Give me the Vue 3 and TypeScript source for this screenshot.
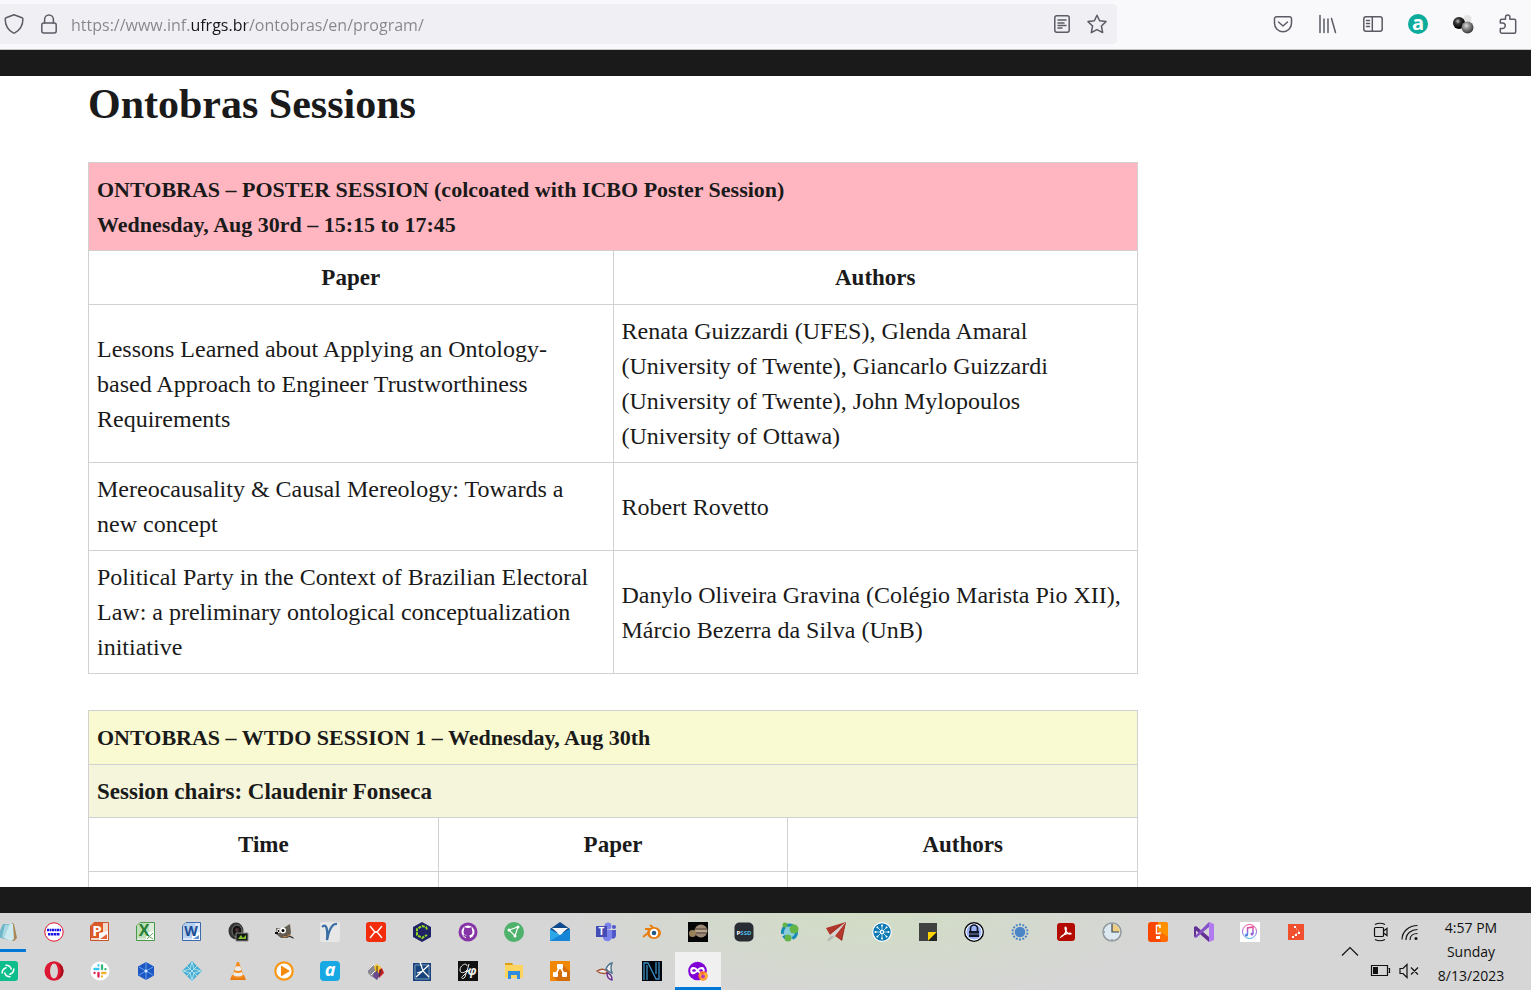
<script setup lang="ts">
import { ref } from 'vue'

interface Paper {
  title: string
  authors: string
}

const url = ref('https://www.inf.ufrgs.br/ontobras/en/program/')

const papers: Paper[] = [
  {
    title: 'Lessons Learned about Applying an Ontology-\nbased Approach to Engineer Trustworthiness Requirements',
    authors:
      'Renata Guizzardi (UFES), Glenda Amaral (University of Twente), Giancarlo Guizzardi\n(University of Twente), John Mylopoulos\n(University of Ottawa)',
  },
  {
    title: 'Mereocausality & Causal Mereology: Towards a new concept',
    authors: 'Robert Rovetto',
  },
  {
    title: 'Political Party in the Context of Brazilian Electoral Law: a preliminary ontological conceptualization initiative',
    authors: 'Danylo Oliveira Gravina (Colégio Marista Pio XII), Márcio Bezerra da Silva (UnB)',
  },
]

const spokes = [0, 45, 90, 135, 180, 225, 270, 315]
const quarters = [0, 90, 180, 270]
const teeth = Array.from({ length: 14 }, (_, i) => (i * 360) / 14)
</script>

<template>
  <div class="screen">
    <header class="toolbar">
      <div class="urlbar">
        <button class="tool shield" aria-label="Tracking protection">
          <svg viewBox="0 0 20 20" class="line">
            <path d="M10 .8 18 3.8c.6.2.9.7.9 1.3 0 5.600-2.800 11-8.100 13.800a1.700 1.700 0 0 1-1.600 0C3.900 16.100 1.200 10.700 1.200 5.100c0-.6.300-1.100.9-1.300z" />
          </svg>
        </button>
        <button class="tool lock" aria-label="Connection secure">
          <svg viewBox="0 0 20 20" class="line">
            <rect x="2.800" y="9" width="14.400" height="10" rx="2" />
            <path d="M5.600 9V5.300a4.400 4.400 0 0 1 8.800 0V9" />
          </svg>
        </button>
        <input v-model="url" class="address" type="text" aria-label="Address" spellcheck="false" />
        <button class="tool" aria-label="Reader view">
          <svg viewBox="0 0 20 20" class="line">
            <rect x="2.800" y="1.800" width="14.400" height="16.400" rx="2" />
            <path d="M6 6h8M6 9h6M6 11.500h8M6 14h4" />
          </svg>
        </button>
        <button class="tool" aria-label="Bookmark this page">
          <svg viewBox="0 0 20 20" class="line">
            <path d="M10 1.200 12.600 6.800 19 7.600 14.400 12 15.700 18.600 10 15.600 4.300 18.600 5.600 12 1 7.600 7.400 6.800z" />
          </svg>
        </button>
      </div>
      <div class="extensions">
        <button class="ext" aria-label="Save to Pocket">
          <svg viewBox="0 0 20 20" class="line">
            <path d="M3.500 2.700h13a2 2 0 0 1 2 2v4.500a8.500 8.500 0 0 1-17 0V4.700a2 2 0 0 1 2-2z" />
            <path d="m5.500 8 4.500 4 4.500-4" />
          </svg>
        </button>
        <button class="ext" aria-label="Library">
          <svg viewBox="0 0 20 20" class="line">
            <path d="M2 1.500v17M6 5v13.500M10 5v13.500M13.500 4.500l4 14" />
          </svg>
        </button>
        <button class="ext" aria-label="Sidebars">
          <svg viewBox="0 0 20 20" class="line">
            <rect x=".8" y="2.800" width="18.400" height="14.400" rx="2.200" />
            <path d="M9.300 3v14M3.500 6.500h3M3.500 9.500h3M3.500 12.500h3" />
          </svg>
        </button>
        <button class="ext" aria-label="Extension a">
          <svg viewBox="0 0 20 20">
            <circle cx="10" cy="10" r="10" fill="#0cab9c" />
            <text x="10" y="15.500" text-anchor="middle" class="glyph" font-size="20" fill="#fff">a</text>
          </svg>
        </button>
        <button class="ext" aria-label="Extension molecules">
          <svg viewBox="0 0 20 20">
            <defs>
              <radialGradient id="ball-dark" cx=".4" cy=".35" r=".6"><stop offset="0" stop-color="#bbb" /><stop offset=".4" stop-color="#333" /><stop offset="1" stop-color="#000" /></radialGradient>
              <radialGradient id="ball-mid" cx=".4" cy=".35" r=".6"><stop offset="0" stop-color="#ddd" /><stop offset=".5" stop-color="#888" /><stop offset="1" stop-color="#444" /></radialGradient>
            </defs>
            <circle cx="14.500" cy="5" r="4" fill="#e4e4e4" />
            <circle cx="6" cy="9" r="6" fill="url(#ball-dark)" />
            <circle cx="14.500" cy="13.500" r="6" fill="url(#ball-mid)" />
          </svg>
        </button>
        <button class="ext" aria-label="Extensions">
          <svg viewBox="0 0 20 20" class="line">
            <path d="M2.300 8.500V6.700a1.500 1.500 0 0 1 1.500-1.500h3.700V3.200a2.200 2.200 0 0 1 4.400 0v2h4.300a1.500 1.500 0 0 1 1.500 1.500v11a1.500 1.500 0 0 1-1.500 1.500H3.800a1.500 1.500 0 0 1-1.500-1.500v-3.200h2.200a2.200 2.200 0 0 0 0-5.500H2.300z" />
          </svg>
        </button>
      </div>
    </header>

    <main class="viewport">
      <div class="page">
        <h1>Ontobras Sessions</h1>

        <table>
          <tbody>
            <tr class="title poster">
              <td colspan="2">
                <strong>ONTOBRAS – POSTER SESSION (colcoated with ICBO Poster Session)<br />Wednesday, Aug 30rd – 15:15 to 17:45</strong>
              </td>
            </tr>
            <tr>
              <th scope="col">Paper</th>
              <th scope="col">Authors</th>
            </tr>
            <tr v-for="paper in papers" :key="paper.title" class="paper">
              <td>{{ paper.title }}</td>
              <td>{{ paper.authors }}</td>
            </tr>
          </tbody>
        </table>

        <table>
          <tbody>
            <tr class="title wtdo">
              <td colspan="3"><strong>ONTOBRAS – WTDO SESSION 1 – Wednesday, Aug 30th</strong></td>
            </tr>
            <tr class="chairs">
              <td colspan="3"><strong>Session chairs: Claudenir Fonseca</strong></td>
            </tr>
            <tr>
              <th scope="col">Time</th>
              <th scope="col">Paper</th>
              <th scope="col">Authors</th>
            </tr>
            <tr class="blank">
              <td></td>
              <td></td>
              <td></td>
            </tr>
          </tbody>
        </table>
      </div>
    </main>

    <footer class="taskbar">
      <nav class="apps" aria-label="Applications">
        <div class="row">
          <button class="app open" aria-label="Notepad">
            <svg viewBox="0 0 20 20"><path d="m14 1 2 1 3 14-3 3-4-1z" fill="#a98653" /><path d="M5 2h10l-4 16-12-3z" fill="#6fb6c8" /><path d="m7 3 8-1-3 16-8-3z" fill="#a9d8e2" /><path d="m12 2 3 0 1 15-3 2-7-3z" fill="#cdeaf0" /></svg>
          </button>
          <button class="app" aria-label="Human viewer">
            <svg viewBox="0 0 20 20"><circle cx="10" cy="10" r="9.200" fill="#fff" stroke="#e2122b" /><path d="M3 8h14" stroke="#1a14e8" stroke-width="2.500" stroke-dasharray="2.500 .5 1.500 .5" /><path d="M4 12.300h12" stroke="#1a14e8" stroke-width="2.500" stroke-dasharray="2 .5 3 .5" /></svg>
          </button>
          <button class="app" aria-label="PowerPoint">
            <svg viewBox="0 0 20 20"><path d="M4 .5h14.500v18H.5V4z" fill="#f2d9cc" stroke="#c8532b" /><path d="M4 1h9v15H1V4z" fill="#dd5a28" /><path d="m9 11 9-2v9H9z" fill="#fff" /><path d="m10 17 7-5v5z" fill="#e36437" /><text x="7" y="14" text-anchor="middle" class="glyph" font-size="15" fill="#fff">P</text></svg>
          </button>
          <button class="app" aria-label="Excel">
            <svg viewBox="0 0 20 20"><path d="M4 .5h14.500v18H.5V4z" fill="#dcecd8" stroke="#4b9a4b" /><path d="M4 1h9v15H1V4z" fill="#bddfb7" /><path d="m10 11 8-2v9h-8z" fill="#fff" /><path d="m11 17 6-6M11 13l6 4" stroke="#61a861" /><text x="8" y="14" text-anchor="middle" class="glyph" font-size="16" fill="#278035">X</text></svg>
          </button>
          <button class="app" aria-label="Word">
            <svg viewBox="0 0 20 20"><path d="M4 .5h14.500v18H.5V4z" fill="#dce8f7" stroke="#3b69a9" /><path d="M4 1h9v15H1V4z" fill="#b6d1ef" /><path d="m10 12 8-2v8h-8z" fill="#fff" /><path d="m11 17 6-4v4z" fill="#5d8fce" /><text x="9" y="14" text-anchor="middle" class="glyph" font-size="14" fill="#1d4c96">W</text></svg>
          </button>
          <button class="app" aria-label="Camera">
            <svg viewBox="0 0 20 20"><ellipse cx="8" cy="9" rx="7.500" ry="8.500" fill="#343434" /><ellipse cx="9" cy="9" rx="5" ry="6" fill="#121212" stroke="#767676" /><circle cx="9" cy="8" r="2" fill="#4a3034" /><path d="M8 11h12v8H8z" fill="#151a15" stroke="#888" /><path d="m10 17 3-4 2 3 3-3v4z" fill="#86c232" /></svg>
          </button>
          <button class="app" aria-label="GIMP">
            <svg viewBox="0 0 20 20"><path d="M2 6 8 7l8-5 1 9-3 5H7l-5-4z" fill="#625c52" /><path d="m10 13 4 0 5 2 1 2-2-1-5-2z" fill="#323232" /><circle cx="4.500" cy="9" r="2" fill="#fff" /><circle cx="9" cy="8.500" r="3" fill="#fff" /><circle cx="4.500" cy="9" r="1" /><circle cx="9" cy="8.500" r="1.500" /><path d="M1 10h3v2H1z" fill="#111" /><path d="m9 15 8-2" stroke="#c68142" /></svg>
          </button>
          <button class="app" aria-label="Vym">
            <svg viewBox="0 0 20 20"><rect width="20" height="20" rx="2" fill="#e7e7e7" /><path d="M2 5c4-4 6 1 5 13C8 12 11 1 17 2" fill="none" stroke="#3b6fa5" stroke-width="2.300" /></svg>
          </button>
          <button class="app" aria-label="XMind">
            <svg viewBox="0 0 20 20"><rect width="20" height="20" rx="3" fill="#f32c0b" /><path d="m4 4 4 5q2 2 4 0l4-5M4 16l4-5q2-2 4 0l4 5" fill="none" stroke="#fff" stroke-width="1.400" /></svg>
          </button>
          <button class="app" aria-label="Hex client">
            <svg viewBox="0 0 20 20"><path d="m10 0 9 5v10l-9 5-9-5V5z" fill="#202363" /><path d="M15 7.500 14 5l-4-1-5 3v6l5 3 5-3" fill="none" stroke="#91dc1d" stroke-width="2" stroke-dasharray="3 1" /></svg>
          </button>
          <button class="app" aria-label="GitHub Desktop">
            <svg viewBox="0 0 20 20"><circle cx="10" cy="10" r="9.500" fill="#8734a6" /><circle cx="10" cy="10" r="6.500" fill="#fff" /><path d="M6.500 5 9 6h2l2.500-1 .5 3c1 3 0 5-2.500 5l.5 4H8v-2c-2 0-2-2-3-2 2-1 2 1 3.500.500V13C6 13 5 11 6 8z" fill="#8734a6" /></svg>
          </button>
          <button class="app" aria-label="Graph">
            <svg viewBox="0 0 20 20"><circle cx="10" cy="10" r="10" fill="#4eb16c" /><path d="m5 8 9-3-3 9z" fill="none" stroke="#fff" stroke-width="1.200" /><g fill="#fff"><circle cx="5" cy="8" r="1.500" /><circle cx="14" cy="5" r="1.500" /><circle cx="11" cy="14" r="1.500" /></g></svg>
          </button>
          <button class="app" aria-label="Mail">
            <svg viewBox="0 0 20 20"><path d="m0 7 10-7 10 7v4H0z" fill="#0e4b8c" /><path d="M0 7l10 6 10-6v12H0z" fill="#2ca7ea" /><path d="m0 19 20-12v12z" fill="#1586d7" /><path d="M2 6h16l-8 7z" fill="#f6f6f6" /></svg>
          </button>
          <button class="app" aria-label="Teams">
            <svg viewBox="0 0 20 20"><circle cx="12" cy="4" r="3.500" fill="#7b83eb" /><circle cx="18" cy="5" r="2" fill="#5059c9" /><path d="M15 8h5v6q-1 4-5 2z" fill="#5059c9" /><path d="M7 8h9v7q-1 5-6 4-3-1-3-4z" fill="#7b83eb" /><rect y="4" width="11" height="11" fill="#434bb5" /><text x="5.500" y="13" text-anchor="middle" class="glyph" font-size="10" fill="#fff">T</text></svg>
          </button>
          <button class="app" aria-label="Blender">
            <svg viewBox="0 0 20 20"><path d="M1 15 11 7H3M8 3l6 5" fill="none" stroke="#e87d0d" stroke-width="2" /><ellipse cx="12" cy="11" rx="7" ry="6" fill="#e87d0d" /><circle cx="12" cy="11" r="4.200" fill="#fff" /><circle cx="12" cy="11" r="2.300" fill="#265787" /></svg>
          </button>
          <button class="app" aria-label="Planets">
            <svg viewBox="0 0 20 20"><path d="M0 0h20v20H0z" fill="#050505" /><circle cx="13" cy="9" r="6.500" fill="#9b8875" /><path d="M7 7h12M7 11h12" stroke="#554138" /><path d="M7 9h12" stroke="#d4c4aa" /><circle cx="4.500" cy="11.500" r="3.500" fill="#99815a" /></svg>
          </button>
          <button class="app" aria-label="PSSD">
            <svg viewBox="0 0 20 20"><rect x=".5" y=".5" width="19" height="19" rx="5" fill="#292d33" /><text x="10" y="12.500" text-anchor="middle" class="glyph" font-size="6" fill="#4bb8ed"><tspan fill="#fff">P</tspan>SSD</text></svg>
          </button>
          <button class="app" aria-label="Network globe">
            <svg viewBox="0 0 20 20"><circle cx="9.500" cy="10" r="7" fill="#8bcbdc" stroke="#168bb8" stroke-width="3" stroke-dasharray="8 2" /><g fill="#63b548"><circle cx="14" cy="7" r="4.500" /><circle cx="8" cy="16" r="3.500" /><circle cx="5" cy="3" r="2.500" /></g></svg>
          </button>
          <button class="app" aria-label="Paper plane">
            <svg viewBox="0 0 20 20"><path d="m1 18 8-8 2 3-8 6z" fill="#aaa" opacity=".7" /><path d="M0 6 20 0 4 13z" fill="#ad3529" /><path d="M20 0 10 14l6 5z" fill="#8d231c" /><path d="m4 13 16-13L9 15z" fill="#d5d5d5" /><path d="m20 0-11 14 6 4z" fill="#b53a2d" /></svg>
          </button>
          <button class="app" aria-label="Hub">
            <svg viewBox="0 0 20 20"><circle cx="10" cy="10" r="9.300" fill="#0978b3" stroke="#fff" stroke-width="1.200" /><g v-for="a in spokes" :key="a" :transform="`rotate(${a} 10 10)`"><path d="M10 8V3" stroke="#fff" stroke-width=".7" /><circle cx="10" cy="3.500" r="1" fill="#fff" /></g><circle cx="10" cy="10" r="2.200" fill="#fff" /><circle cx="10" cy="10" r="1" fill="#0978b3" /></svg>
          </button>
          <button class="app" aria-label="Sticky Notes">
            <svg viewBox="0 0 20 20"><path d="M1 1h18v18H1z" fill="#414141" /><path d="M10 10h9l-9 9z" fill="#ffd400" /><path d="M19 10v9h-9z" fill="#232323" /></svg>
          </button>
          <button class="app" aria-label="KeePass">
            <svg viewBox="0 0 20 20"><circle cx="10" cy="10" r="9.300" fill="#9eb2f6" stroke="#080808" stroke-width="1.400" /><circle cx="10" cy="10" r="8" fill="none" stroke="#fff" /><path d="M6.500 9V6.500a3.500 3.500 0 0 1 7 0V9" fill="none" stroke="#101827" stroke-width="1.700" /><path d="M5 9h10v6H5z" fill="#101827" /><path d="M5 12h10" stroke="#8fa7e8" stroke-width=".8" /></svg>
          </button>
          <button class="app" aria-label="Blue sun">
            <svg viewBox="0 0 20 20"><circle cx="10" cy="10" r="5.300" fill="#4d86c6" /><path v-for="a in teeth" :key="a" :transform="`rotate(${a} 10 10)`" d="M9 1.500h2v2H9z" fill="#4d86c6" /></svg>
          </button>
          <button class="app" aria-label="Acrobat">
            <svg viewBox="0 0 20 20"><rect x="1" y="1" width="18" height="18" rx="3" fill="#b30b00" /><path d="M5 15c6-3 6-10 4.500-10S10 13 15 12c1-2-8 0-10 3z" fill="none" stroke="#fff" stroke-width="1.200" /></svg>
          </button>
          <button class="app" aria-label="Clock">
            <svg viewBox="0 0 20 20"><circle cx="10" cy="10" r="9" fill="#dce9f0" stroke="#92999e" stroke-width="1.500" /><path d="M10 10V2a8 8 0 0 1 8 8z" fill="#efcd83" /><path d="M10 2v8h7" fill="none" stroke="#354759" stroke-width="1.200" /><path d="M10 17v1M2 10h1" stroke="#59636c" /></svg>
          </button>
          <button class="app" aria-label="CCleaner">
            <svg viewBox="0 0 20 20"><rect width="20" height="20" rx="3" fill="#f94700" /><path d="M10 0h7q3 0 3 3v12L10 9z" fill="#ff9100" /><path d="m10 9 10 6v2q0 3-3 3h-4z" fill="#ff6d00" /><path d="M12 6V3.500H8.500v8H12V10" fill="none" stroke="#fff" stroke-width="1.500" /><path d="M8 14h4v3H8z" fill="#fff" /></svg>
          </button>
          <button class="app" aria-label="Visual Studio">
            <svg viewBox="0 0 20 20"><path d="M0 5 2 4l13 11v5L2 8.500v6L0 15z" fill="#623193" /><path d="M0 15 15 0v5L2 16z" fill="#8650c7" /><path d="m15 0 5 2v16l-5 2z" fill="#b27af0" /></svg>
          </button>
          <button class="app" aria-label="iTunes">
            <svg viewBox="0 0 20 20"><defs><linearGradient id="tunes" x2="0" y2="1"><stop stop-color="#ed4d91" /><stop offset=".5" stop-color="#a15bd7" /><stop offset="1" stop-color="#3fb3ed" /></linearGradient></defs><path d="M0 0h20v20H0z" fill="#fff" /><circle cx="9.500" cy="9.500" r="7" fill="none" stroke="url(#tunes)" /><path d="M7.500 13V6l5.500-1v7" fill="none" stroke="url(#tunes)" stroke-width="1.500" /><circle cx="6.500" cy="13" r="1.500" fill="#557be2" /><circle cx="12" cy="12" r="1.500" fill="#9a5bd8" /></svg>
          </button>
          <button class="app" aria-label="Git graph">
            <svg viewBox="0 0 20 20"><path d="M2 2h16v16H2z" fill="#f1502f" /><path d="m8 5 5 4-5 6" fill="none" stroke="#fff" stroke-width="1" stroke-dasharray="1 2" /><g fill="#fff"><path d="M8 4h2v2H8zM12 10h2v2h-2zM9 12h2v2H9zM6 14h2v2H6z" /></g></svg>
          </button>
        </div>
        <div class="row lower">
          <button class="app" aria-label="Element">
            <svg viewBox="0 0 20 20"><rect x="-2" width="22" height="20" rx="3" fill="#0dbd8b" /><g fill="none" stroke="#fff" stroke-width="1.500" stroke-linecap="round"><path v-for="a in quarters" :key="a" :transform="`rotate(${a} 10 10)`" d="M8 4.200q4 0 5.200 3.800" /></g></svg>
          </button>
          <button class="app" aria-label="Opera">
            <svg viewBox="0 0 20 20"><ellipse cx="10" cy="10" rx="9.500" ry="9.800" fill="#dc1832" /><path d="M14 3c4 3 4 11 0 14 4 0 5.500-4 5.500-7S18 3 14 3z" fill="#a70d1c" /><ellipse cx="10" cy="10" rx="4" ry="7.500" fill="#d6d6d6" /></svg>
          </button>
          <button class="app" aria-label="Slack">
            <svg viewBox="0 0 20 20"><circle cx="10" cy="10" r="9.500" fill="#fff" /><g fill="none" stroke-width="2.300" stroke-linecap="round"><path d="M8.500 4.500v.1M4.500 8h4" stroke="#36c5f0" /><path d="M12 4.500v3.500M15.500 8.200h-.1" stroke="#2eb67d" /><path d="M12 15.500v-.1M12 12h3.500" stroke="#ecb22e" /><path d="M8.500 12v3.500M4.500 12h.1" stroke="#e01e5a" /></g></svg>
          </button>
          <button class="app" aria-label="Blue hexagon">
            <svg viewBox="0 0 20 20"><path d="m10 1 8 4.500v9L10 19l-8-4.500v-9z" fill="#1d57c4" /><path d="M10 1v18M3 6l14 8M17 6 3 14" stroke="#79b2f7" stroke-width=".8" /><circle cx="10" cy="10" r="1.500" fill="#d6e8ff" /></svg>
          </button>
          <button class="app" aria-label="Blue diamond">
            <svg viewBox="0 0 20 20"><path d="m10 0 10 10-10 10L0 10z" fill="#49add3" /><path d="m5 5 10 10M15 5 5 15M10 1 8 8l-7 2 7 2 2 7 2-7 7-2-7-2z" fill="none" stroke="#c4eef9" stroke-width=".8" /></svg>
          </button>
          <button class="app" aria-label="VLC">
            <svg viewBox="0 0 20 20"><path d="m4 14-2 5h16l-2-5z" fill="#e77a10" /><path d="M9 1h2l5 15q-6 3-12 0z" fill="#f58d1e" /><path d="m8 5-1.500 4q4 2 7 0L12 5q-2 1-4 0zM6 11l-1 3q5 3 10 0l-1-3q-4 2-8 0z" fill="#eee" /></svg>
          </button>
          <button class="app" aria-label="Media player">
            <svg viewBox="0 0 20 20"><circle cx="10" cy="10" r="8.700" fill="#fff" stroke="#f99815" stroke-width="2.200" /><path d="m7 4.500 9 5.500-9 5.500z" fill="#f48a0c" /></svg>
          </button>
          <button class="app" aria-label="Audio a">
            <svg viewBox="0 0 20 20"><rect width="20" height="20" rx="4" fill="#18a9e5" /><text x="10" y="15" text-anchor="middle" class="glyph slant" font-size="18" fill="#fff">a</text></svg>
          </button>
          <button class="app" aria-label="Colour blocks">
            <svg viewBox="0 0 20 20"><path d="m2 8 5-4 3 3 1 8-5 1-4-4z" fill="#8c8794" /><path d="m8 5 3-2 4 3v7l-5 1z" fill="#efc52c" /><path d="m13 9 3-2 2 5-5 5z" fill="#c22125" /><path d="m8 12 3-2 3 4-3 5-4-3z" fill="#6a4a8e" /><path d="m2 9 6-6M5 14l4-4" stroke="#eee" /><path d="M11 5v6M15 9l-2 6" stroke="#4a242c" /></svg>
          </button>
          <button class="app" aria-label="Star chart">
            <svg viewBox="0 0 20 20"><path d="M1 2h18v18H1z" fill="#18427b" /><path d="M3 4h14v14H3z" fill="none" stroke="#7798bd" /><path d="M4 16 17 4M8 1l3 9 6 6M5 12l6-2" fill="none" stroke="#fff" stroke-width="1.300" /></svg>
          </button>
          <button class="app" aria-label="Script G phi">
            <svg viewBox="0 0 20 20"><path d="M0 0h20v20H0z" fill="#111" /><path d="M9 5C9 1 2 4 2 9c0 4 5 3 7 0l-2 7c-2 3-5 1-2-1l6-6M11 3 9 10" fill="none" stroke="#eee" /><text x="14" y="14" text-anchor="middle" class="glyph slant" font-size="12" fill="#eee">φ</text></svg>
          </button>
          <button class="app" aria-label="File Explorer">
            <svg viewBox="0 0 20 20"><path d="M1 2h7l2 3H1z" fill="#dca012" /><path d="M1 4h18v13H1z" fill="#ffd45e" /><path d="M4 10h12v8h-3v-4H7v4H4z" fill="#2d8ce0" /></svg>
          </button>
          <button class="app" aria-label="Diagrams">
            <svg viewBox="0 0 20 20"><path d="M0 0h20v20H0z" fill="#f08705" /><path d="m12 3 8 8v9H8l-5-4z" fill="#d46c08" /><path d="m10 6-5 8M10 6l5 8" stroke="#fff" stroke-width="1.500" /><g fill="#fff"><rect x="7" y="3" width="6" height="5" rx="1" /><rect x="3" y="11" width="5" height="5" rx="1" /><rect x="12" y="11" width="5" height="5" rx="1" /></g></svg>
          </button>
          <button class="app" aria-label="Tri-blade">
            <svg viewBox="0 0 20 20"><g fill="#f3eef0" stroke-width="1.400"><path d="M1 10c5-3 9-2 11 2-5 1-8 1-11-2z" stroke="#a45635" /><path d="M10 8q2-5 6-6-2 5 0 10-4-1-6-4z" stroke="#49728c" /><path d="M11 12q5 1 5 7-5-1-5-7z" stroke="#66308d" /></g></svg>
          </button>
          <button class="app" aria-label="Neon N">
            <svg viewBox="0 0 20 20"><path d="M0 0h20v20H0z" fill="#02060c" /><path d="M2 19V2h4l8 16h3V1M5 4v15M14 1v12" fill="none" stroke="#3b8fc1" stroke-width="1.300" /></svg>
          </button>
          <button class="app active" aria-label="Firefox private window">
            <svg viewBox="0 0 20 20"><circle cx="9.500" cy="10" r="9.300" fill="#8000d7" /><path d="M2.500 8c1-3 5-2 7 0 2-2 6-3 7 0 1 4-1 6-4 5l-3-2-3 2c-3 1-5-1-4-5z" fill="#fff" /><g fill="#8000d7"><ellipse cx="6" cy="9.500" rx="1.800" ry="1.200" /><ellipse cx="13" cy="9.500" rx="1.800" ry="1.200" /></g><circle cx="15" cy="15" r="4.700" fill="#ff6b2d" /><path d="M11 12q2 0 3 2l4-3q2 3 1 6-3 3-6 2z" fill="#ffb52e" /><circle cx="15" cy="15.500" r="2" fill="#bd38b5" /></svg>
          </button>
        </div>
      </nav>

      <div class="tray">
        <button class="trayicon chevron" aria-label="Show hidden icons">
          <svg viewBox="0 0 20 20" class="ink"><path d="m2 13.500 8-8 8 8" /></svg>
        </button>
        <div class="status">
          <button class="trayicon" aria-label="Meet now">
            <svg viewBox="0 0 20 20" class="ink"><rect x="4.500" y="5.500" width="9" height="9" rx="1" /><path d="m13.500 9 3.500-2.500v7L13.500 11M5 2.500q5-2.500 10 0M5 17.500q5 2.500 10 0" /></svg>
          </button>
          <button class="trayicon" aria-label="Network">
            <svg viewBox="0 0 20 20" class="ink"><path d="M2 17.500C2 9.500 9 3.500 17.500 3.500M6 18C6 11.500 11.500 7.500 17.500 7.500M10 18c0-4 3-6.500 7.500-6.500" /><circle cx="16" cy="16.500" r="1.500" fill="#111" stroke="none" /></svg>
          </button>
          <button class="trayicon" aria-label="Battery">
            <svg viewBox="0 0 20 20" class="ink"><path d="M1.500 4.500h16v10h-16zM18.500 7.500h1v4h-1" /><path d="M3 6h5v7H3z" fill="#111" stroke="none" /></svg>
          </button>
          <button class="trayicon" aria-label="Volume muted">
            <svg viewBox="0 0 20 20" class="ink"><path d="M0 7.500h3l4-4v13l-4-4H0zM11 6.500l7 7M18 6.500l-7 7" /></svg>
          </button>
        </div>
        <button class="clock">
          <span>4:57 PM</span>
          <span>Sunday</span>
          <span>8/13/2023</span>
        </button>
      </div>
    </footer>
  </div>
</template>

<style>
body {
  margin: 0;
}
</style>

<style scoped>
* {
  box-sizing: border-box;
}

.screen {
  display: flex;
  flex-direction: column;
  height: 100vh;
  overflow: hidden;
  background: #1a1a1a;
}

button {
  border: 0;
  padding: 0;
  background: none;
  font: inherit;
  color: inherit;
}

svg {
  display: block;
  width: 20px;
  height: 20px;
  overflow: visible;
}

.line {
  fill: none;
  stroke: #5b5b66;
  stroke-width: 1.5;
  stroke-linecap: round;
  stroke-linejoin: round;
}

.ink {
  fill: none;
  stroke: #111;
  stroke-width: 1.2;
}

.glyph {
  font-family: "Open Sans", sans-serif;
  font-weight: 700;
}

.slant {
  font-style: italic;
}

.toolbar {
  display: flex;
  flex: none;
  height: 50px;
  padding: 4px 0 5px;
  background: #f9f9fb;
  border-bottom: 1px solid #c4c4c8;
}

.urlbar {
  display: flex;
  flex: 1;
  align-items: center;
  min-width: 0;
  padding: 0 10px 0 4px;
  background: #f0f0f4;
  border-radius: 0 4px 4px 0;
}

.tool {
  flex: none;
  margin-left: 15px;
}

.shield {
  margin-left: 0;
}

.address {
  flex: 1;
  min-width: 0;
  height: 36px;
  margin-left: 12px;
  padding: 2px 0 0;
  border: 0;
  outline: 0;
  background: linear-gradient(90deg, #85858b 119px, #15141a 119px, #15141a 175px, #85858b 175px);
  background-clip: text;
  color: transparent;
  font-family: "Open Sans", sans-serif;
  font-size: 16px;
}

.extensions {
  display: flex;
  align-items: center;
  gap: 25px;
  margin-left: 156px;
  padding-right: 13px;
}

.viewport {
  flex: 1;
  min-height: 0;
  margin: 26px 0;
  overflow: hidden;
  background: #fff;
}

.page {
  max-width: 1138px;
  padding-left: 88px;
  color: #1a1a1a;
  font-family: "Liberation Serif", serif;
  font-size: 23px;
  line-height: 35px;
}

h1 {
  margin: 0;
  padding: 7px 0 37px;
  font-size: 42px;
  font-weight: 700;
  line-height: 42px;
}

table {
  width: 100%;
  margin-bottom: 36px;
  border-collapse: collapse;
  table-layout: fixed;
}

td,
th {
  padding: 9px 8px 8px;
  border: 1px solid #d1d1d1;
}

th,
.wtdo td {
  padding-bottom: 9px;
}

.title {
  font-size: 22px;
}

.paper {
  font-size: 24px;
  white-space: pre-line;
}

.poster {
  background: #ffb6c1;
}

.wtdo {
  background: #fafad2;
}

.chairs {
  background: #f5f5dc;
}

.blank td {
  height: 54px;
}

.taskbar {
  display: flex;
  flex: none;
  justify-content: space-between;
  height: 77px;
  overflow: hidden;
  background: radial-gradient(ellipse 300px 90px at 870px 0, #d1dcc4, #d6d6d6);
}

.apps {
  margin-left: -15px;
}

.row {
  display: flex;
  height: 39px;
}

.lower {
  height: 38px;
}

.app {
  display: flex;
  flex: none;
  align-items: center;
  justify-content: center;
  width: 46px;
  border-bottom: 3px solid transparent;
  border-top: 2px solid transparent;
}

.lower .app {
  border-top-width: 3px;
}

.open {
  background: linear-gradient(#0078d7, #0078d7) 0 100% / 41px 3px no-repeat border-box;
}

.active {
  background: #f0f0f0;
  border-top-color: #f0f0f0;
  border-bottom-color: #0078d7;
}

.tray {
  display: flex;
  align-items: center;
  padding-right: 26px;
}

.status {
  display: grid;
  grid-template-columns: 20px 20px;
  gap: 19px 10px;
  margin: 0 17px 0 10px;
}

.clock {
  display: flex;
  flex-direction: column;
  width: 68px;
  align-items: center;
  color: #111;
  font-family: "Open Sans", sans-serif;
  font-size: 14px;
  line-height: 24px;
  white-space: nowrap;
}
</style>
